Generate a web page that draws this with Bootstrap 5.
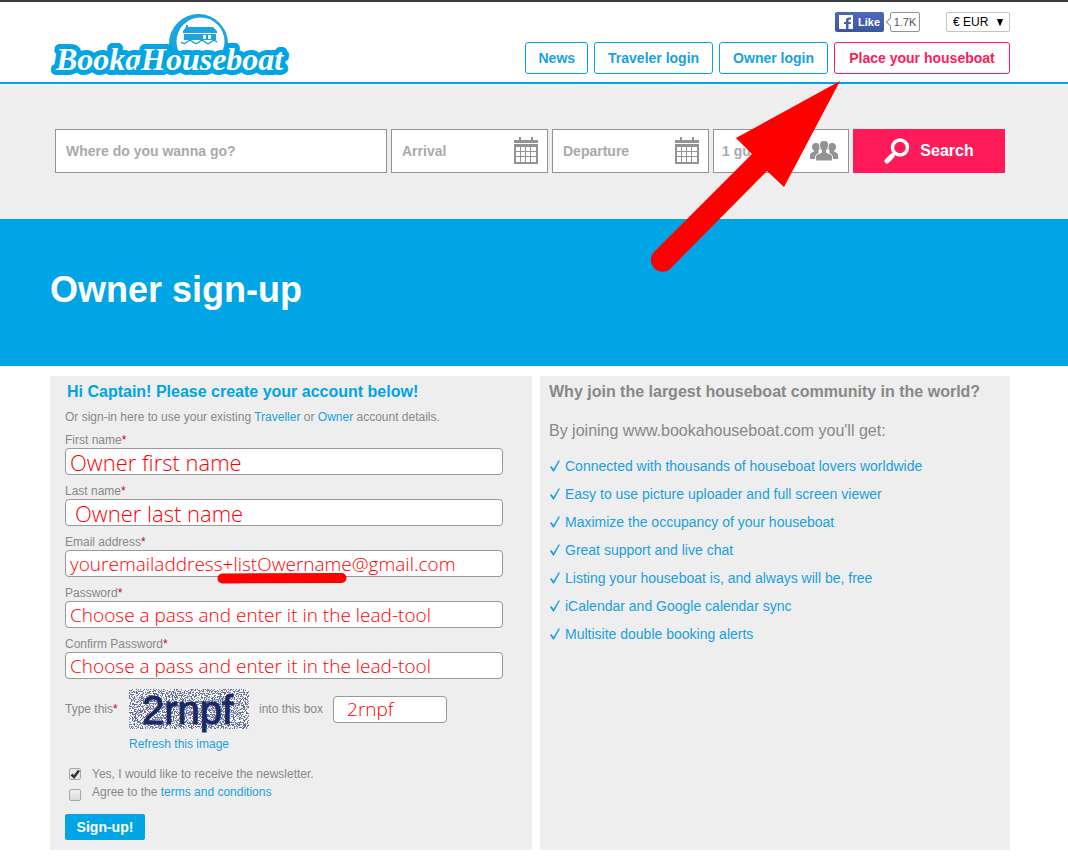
<!DOCTYPE html>
<html lang="en">
<head>
<meta charset="utf-8">
<meta name="viewport" content="width=device-width, initial-scale=1">
<title>Owner sign-up | BookaHouseboat</title>
<link href="https://cdn.jsdelivr.net/npm/bootstrap@5.3.0/dist/css/bootstrap.min.css" rel="stylesheet">
<style>
:root{--sea:#00a5e5;--pink:#ff1b5a;--fog:#eee;--steel:#888;--mark:#f00}
body{font-family:"Liberation Sans",Arial,sans-serif;font-size:12px;line-height:16px;color:var(--steel);background:#fff}
a{color:#1a9fe0;text-decoration:none}
.page-gutter{padding-left:50px;padding-right:58px}
.site-header{border-top:2px solid #3c3a3b;border-bottom:2px solid var(--sea);padding-top:10px;padding-bottom:8px}
.logo{width:240px;height:62px;display:block;overflow:visible}
.header-tools{gap:10px}
.like-btn{background:linear-gradient(#4c69ba,#3b55a0);color:#fff;font-weight:bold;font-size:11px;line-height:20px;height:20px;width:49px;border:0;border-radius:2px;padding:0 4px}
.like-count{margin-left:6px;margin-right:26px;width:30px;height:20px;border:1px solid #8d949e;border-radius:2px;font-size:11px;line-height:18px;text-align:center;color:#555}
.like-count::before{content:"";position:absolute;left:-4px;top:6px;width:6px;height:6px;background:#fff;border-left:1px solid #8d949e;border-bottom:1px solid #8d949e;transform:rotate(45deg)}
.currency{width:64px;height:20px;font-size:12px;line-height:18px;padding:0 0 0 6px;color:#000;border:1px solid #c4c4c4;border-radius:2px;background:#fff url("data:image/svg+xml,%3Csvg xmlns='http://www.w3.org/2000/svg' viewBox='0 0 6 7'%3E%3Cpath d='M0 0h6L3.500 6.500h-1z'/%3E%3C/svg%3E") no-repeat right 6px center/6px 7px}
.nav-row{gap:6px}
.btn-line{--bs-btn-font-size:14px;--bs-btn-line-height:20px;--bs-btn-padding-x:12px;--bs-btn-padding-y:5px;--bs-btn-color:#1a9fe0;--bs-btn-border-color:var(--sea);--bs-btn-hover-bg:var(--sea);--bs-btn-hover-color:#fff;--bs-btn-border-radius:3px;font-weight:bold}
.btn-login{--bs-btn-padding-x:13px}
.btn-line-pink{--bs-btn-color:var(--pink);--bs-btn-border-color:var(--pink);--bs-btn-hover-bg:var(--pink);min-width:176px}
.search-band{background:var(--fog);padding-top:45px;padding-bottom:46px}
.search-form{gap:4px;padding:0 5px}
.search-form .form-control{height:44px;border:1px solid #939393;border-radius:0;font-size:14px;font-weight:bold;padding:0 10px;color:#555}
.search-form .form-control::placeholder{color:#aaa;opacity:1}
.date-box{width:157px}.guest-box{width:136px}
.box-icon{position:absolute;right:10px;top:8px}
.btn-search{width:152px;height:44px;border-radius:0;background:var(--pink);color:#fff;font-size:16px;font-weight:bold;gap:10px}
.title-band{background:var(--sea);color:#fff;padding-top:49px;padding-bottom:54px}
.title-band h1{font-size:36px;line-height:44px;font-weight:bold;margin:0}
.panels{padding-top:10px;padding-bottom:11px;gap:8px}
.panel{background:var(--fog);min-width:0}
.panel-join{flex:1 1 482px;padding:6px 15px 10px}
.panel-why{flex:1 1 470px;padding:6px 9px 10px}
.panel h2{font-size:16px;line-height:20px;font-weight:bold;margin:0}
.panel-join h2{color:var(--sea);padding-left:2px}
.intro{margin:7px 0}
.req{color:#d0021b}
.field{max-width:438px;margin-bottom:8px}
.field label{display:block}
.pen,.pen:focus{height:27px;border:1px solid #999;border-radius:4px;padding:0 4px;font-family:"Open Sans","Noto Sans",sans-serif;font-weight:300;font-size:19px;line-height:25px;color:var(--mark)}
.pen-lg{font-size:22px}
.pen-in{padding-left:9px}
.underline{position:absolute;left:152px;bottom:-7px;width:130px;height:11px}
.captcha-row{margin-top:10px}
.captcha-label{width:64px}
.captcha{width:120px;height:40px;display:block;overflow:visible}
.captcha-row .between{margin:0 10px}
.captcha-row .captcha-box{width:114px;padding-left:13px}
.refresh{display:inline-block;margin:7px 0 14px 64px}
.opt{gap:11px;padding-left:4px;margin-bottom:2px}
.opt .form-check-input{width:12px;height:12px;margin:2px 0 0;border:1px solid #a8a8a8;border-radius:2px;background:linear-gradient(#f0f0f0,#dcdcdc)}
.opt .form-check-input:checked{background:url("data:image/svg+xml,%3Csvg xmlns='http://www.w3.org/2000/svg' viewBox='0 0 10 10'%3E%3Cpath d='M1.500 5.500l2.500 2.500L9 1.500' fill='none' stroke='%23333' stroke-width='2.500'/%3E%3C/svg%3E") center/10px 10px no-repeat #e8e8e8}
.opt-low .form-check-input{margin-top:5px}
.btn-join{width:80px;height:26px;margin-top:13px;padding:0;background:var(--sea);color:#fff;font-size:14px;line-height:26px;font-weight:bold;border:0;border-radius:2px;display:block}
.why-lead{font-size:16px;line-height:20px;margin:19px 0 11px}
.perks li{font-size:14px;line-height:28px;gap:4px}
.pointer{position:absolute;right:228px;top:81px;width:189px;height:191px;pointer-events:none;z-index:5}
</style>
</head>
<body class="position-relative">
<svg width="0" height="0" class="position-absolute" aria-hidden="true">
  <symbol id="cal" viewBox="0 0 24 27"><path fill="#939393" d="M5 0h2v4h-2zM17 0h2v4h-2zM0 3h24v3H0zM0 7h24v1H0z"/><path fill="none" stroke="#939393" stroke-width="2" d="M1 9v17h22V9z"/><path stroke="#939393" stroke-width="1" d="M6.500 9v17M11.500 9v17M16.500 9v17M1 14.500h22M1 19.500h22"/></symbol>
  <symbol id="tick" viewBox="0 0 11 12"><path fill="#1a9fe0" d="M0.500 7l1.500-1 2 3L9 0.500H10.500L4.500 11.500H3.500z"/></symbol>
</svg>

<header class="site-header page-gutter d-flex justify-content-between align-items-start">
  <a href="#" aria-label="BookaHouseboat home">
    <svg class="logo" viewBox="0 0 240 62">
      <circle cx="148.500" cy="31.500" r="29.500" fill="#1ba4dd"/>
      <circle cx="150.500" cy="29.500" r="24" fill="#fff"/>
      <g font-family="Liberation Serif,serif" font-weight="bold" font-style="italic" font-size="32" fill="#fff" stroke="#00a5e5" stroke-width="10" stroke-linejoin="round" paint-order="stroke">
        <text x="6" y="58">Booka</text><text x="91" y="58">Houseboat</text>
      </g>
      <path fill="#1ba4dd" d="M136 13h2v2h25l4 4v2h-34v-2l3-4zM134 22h32v6h-32z"/>
      <path fill="#fff" d="M153 23h3v4h-3zM158 23h3v4h-3z"/>
      <path fill="none" stroke="#1ba4dd" stroke-width="1.500" d="M131 30q3 3 6 0q3-3 6 0q3 3 6 0q3-3 6 0q3 3 6 0q3-3 6 0"/>
    </svg>
  </a>
  <div class="header-tools d-flex flex-column align-items-end">
    <div class="d-flex">
      <button type="button" class="like-btn d-flex align-items-center justify-content-between">
        <svg width="14" height="14" viewBox="0 0 14 14" aria-hidden="true"><path fill="#fff" d="M0 0h14v14H0z"/><path fill="#4460ad" d="M7 14V9H5V7h2V5.500Q7 2.500 10 2.500h2v2h-1.500Q9.500 4.500 9.500 5.500V7H12l-.3 2H9.500v5z"/></svg>
        <span>Like</span></button>
      <span class="like-count position-relative">1.7K</span>
      <select class="form-select currency" aria-label="Currency"><option>€ EUR</option><option>$ USD</option></select>
    </div>
    <nav class="nav-row d-flex" aria-label="Main">
      <a class="btn btn-line" href="#">News</a>
      <a class="btn btn-line btn-login" href="#">Traveler login</a>
      <a class="btn btn-line btn-login" href="#">Owner login</a>
      <a class="btn btn-line btn-line-pink" href="#">Place your houseboat</a>
    </nav>
  </div>
</header>

<section class="search-band page-gutter">
  <form class="search-form d-flex">
    <div class="flex-fill"><input class="form-control" type="text" placeholder="Where do you wanna go?" aria-label="Destination"></div>
    <div class="date-box position-relative"><input class="form-control" type="text" placeholder="Arrival" aria-label="Arrival"><svg class="box-icon" width="24" height="27"><use href="#cal"/></svg></div>
    <div class="date-box position-relative"><input class="form-control" type="text" placeholder="Departure" aria-label="Departure"><svg class="box-icon" width="24" height="27"><use href="#cal"/></svg></div>
    <div class="guest-box position-relative"><input class="form-control px-2" type="text" placeholder="1 guest" aria-label="Guests">
      <svg class="box-icon" width="30" height="28" viewBox="0 0 30 28" aria-hidden="true"><g fill="#939393"><circle cx="7" cy="10" r="4"/><circle cx="23" cy="10" r="4"/><path d="M1 22v-4q0-2 4-3.500V12h4l2 10zM29 22v-4q0-2-4-3.500V12h-4l-2 10z"/></g><path fill="#939393" stroke="#fff" stroke-width="1" d="M15 3.500q-5 0-4.500 5 .3 3.500 2 5v2q-6 1.500-6 4v4.500h17v-4.500q0-2.500-6-4v-2q1.700-1.500 2-5 .5-5-4.500-5z"/></svg></div>
    <button type="submit" class="btn btn-search d-flex align-items-center justify-content-center">
      <svg width="26" height="26" viewBox="0 0 26 26" fill="none" stroke="#fff" aria-hidden="true"><circle cx="16" cy="9.500" r="7.500" stroke-width="3.500"/><path d="M10 16l-2 2" stroke-width="3"/><path d="M8 18l-5 5" stroke-width="5" stroke-linecap="round"/></svg>
      Search</button>
  </form>
</section>

<section class="title-band page-gutter"><h1>Owner sign-up</h1></section>

<main class="panels page-gutter d-flex">
  <section class="panel panel-join">
    <h2>Hi Captain! Please create your account below!</h2>
    <p class="intro">Or sign-in here to use your existing <a href="#">Traveller</a> or <a href="#">Owner</a> account details.</p>
    <form>
      <div class="field"><label for="first">First name<span class="req">*</span></label><input id="first" class="form-control pen pen-lg" type="text" value="Owner first name"></div>
      <div class="field"><label for="last">Last name<span class="req">*</span></label><input id="last" class="form-control pen pen-lg pen-in" type="text" value="Owner last name"></div>
      <div class="field position-relative"><label for="email">Email address<span class="req">*</span></label><input id="email" class="form-control pen" type="text" value="youremailaddress+listOwername@gmail.com">
        <svg class="underline" viewBox="0 0 130 11" aria-hidden="true"><path d="M5.500 5.500L124.500 5" stroke="#f00" stroke-width="10" stroke-linecap="round"/></svg></div>
      <div class="field"><label for="pass">Password<span class="req">*</span></label><input id="pass" class="form-control pen" type="text" value="Choose a pass and enter it in the lead-tool"></div>
      <div class="field"><label for="pass2">Confirm Password<span class="req">*</span></label><input id="pass2" class="form-control pen" type="text" value="Choose a pass and enter it in the lead-tool"></div>
      <div class="captcha-row d-flex align-items-center">
        <label class="captcha-label" for="code">Type this<span class="req">*</span></label>
        <svg class="captcha" viewBox="0 0 120 40" role="img" aria-label="Captcha code">
          <filter id="grain" x="0" y="0" width="100%" height="100%" color-interpolation-filters="sRGB"><feTurbulence type="fractalNoise" baseFrequency="0.9" numOctaves="2" seed="7"/><feColorMatrix values="0 0 0 0 .38  0 0 0 0 .42  0 0 0 0 .58  14 0 0 0 -6.800"/></filter>
          <path fill="#fff" d="M0 0h120v40H0z"/>
          <path d="M10 8L105 34M14 33L112 14M20 14L108 24M8 22L100 9M30 38L95 12" stroke="#5663a6" stroke-width="1" opacity=".7"/>
          <rect width="120" height="40" filter="url(#grain)"/>
          <text x="13" y="35" font-family="Liberation Sans,sans-serif" font-size="40" fill="#1b2866" stroke="#1b2866">2rnpf</text>
        </svg>
        <span class="between text-nowrap">into this box</span>
        <input id="code" class="form-control pen captcha-box" type="text" value="2rnpf">
      </div>
      <a class="refresh" href="#">Refresh this image</a>
      <div class="opt d-flex"><input class="form-check-input flex-shrink-0" type="checkbox" id="news" checked><label for="news">Yes, I would like to receive the newsletter.</label></div>
      <div class="opt opt-low d-flex"><input class="form-check-input flex-shrink-0" type="checkbox" id="terms"><label for="terms">Agree to the <a href="#">terms and conditions</a></label></div>
      <button type="submit" class="btn-join">Sign-up!</button>
    </form>
  </section>
  <section class="panel panel-why">
    <h2>Why join the largest houseboat community in the world?</h2>
    <p class="why-lead">By joining www.bookahouseboat.com you'll get:</p>
    <ul class="perks list-unstyled m-0">
      <li class="d-flex align-items-center"><svg width="12" height="12"><use href="#tick"/></svg><a href="#">Connected with thousands of houseboat lovers worldwide</a></li>
      <li class="d-flex align-items-center"><svg width="12" height="12"><use href="#tick"/></svg><a href="#">Easy to use picture uploader and full screen viewer</a></li>
      <li class="d-flex align-items-center"><svg width="12" height="12"><use href="#tick"/></svg><a href="#">Maximize the occupancy of your houseboat</a></li>
      <li class="d-flex align-items-center"><svg width="12" height="12"><use href="#tick"/></svg><a href="#">Great support and live chat</a></li>
      <li class="d-flex align-items-center"><svg width="12" height="12"><use href="#tick"/></svg><a href="#">Listing your houseboat is, and always will be, free</a></li>
      <li class="d-flex align-items-center"><svg width="12" height="12"><use href="#tick"/></svg><a href="#">iCalendar and Google calendar sync</a></li>
      <li class="d-flex align-items-center"><svg width="12" height="12"><use href="#tick"/></svg><a href="#">Multisite double booking alerts</a></li>
    </ul>
  </section>
</main>

<svg class="pointer" viewBox="0 0 189 191" aria-hidden="true"><path fill="#f00" d="M189 0L85 57l16 16L3 171a11.500 11.500 0 0 0 17 16L116 90l17 16z"/></svg>
<script src="https://cdn.jsdelivr.net/npm/bootstrap@5.3.0/dist/js/bootstrap.bundle.min.js"></script>
</body>
</html>
